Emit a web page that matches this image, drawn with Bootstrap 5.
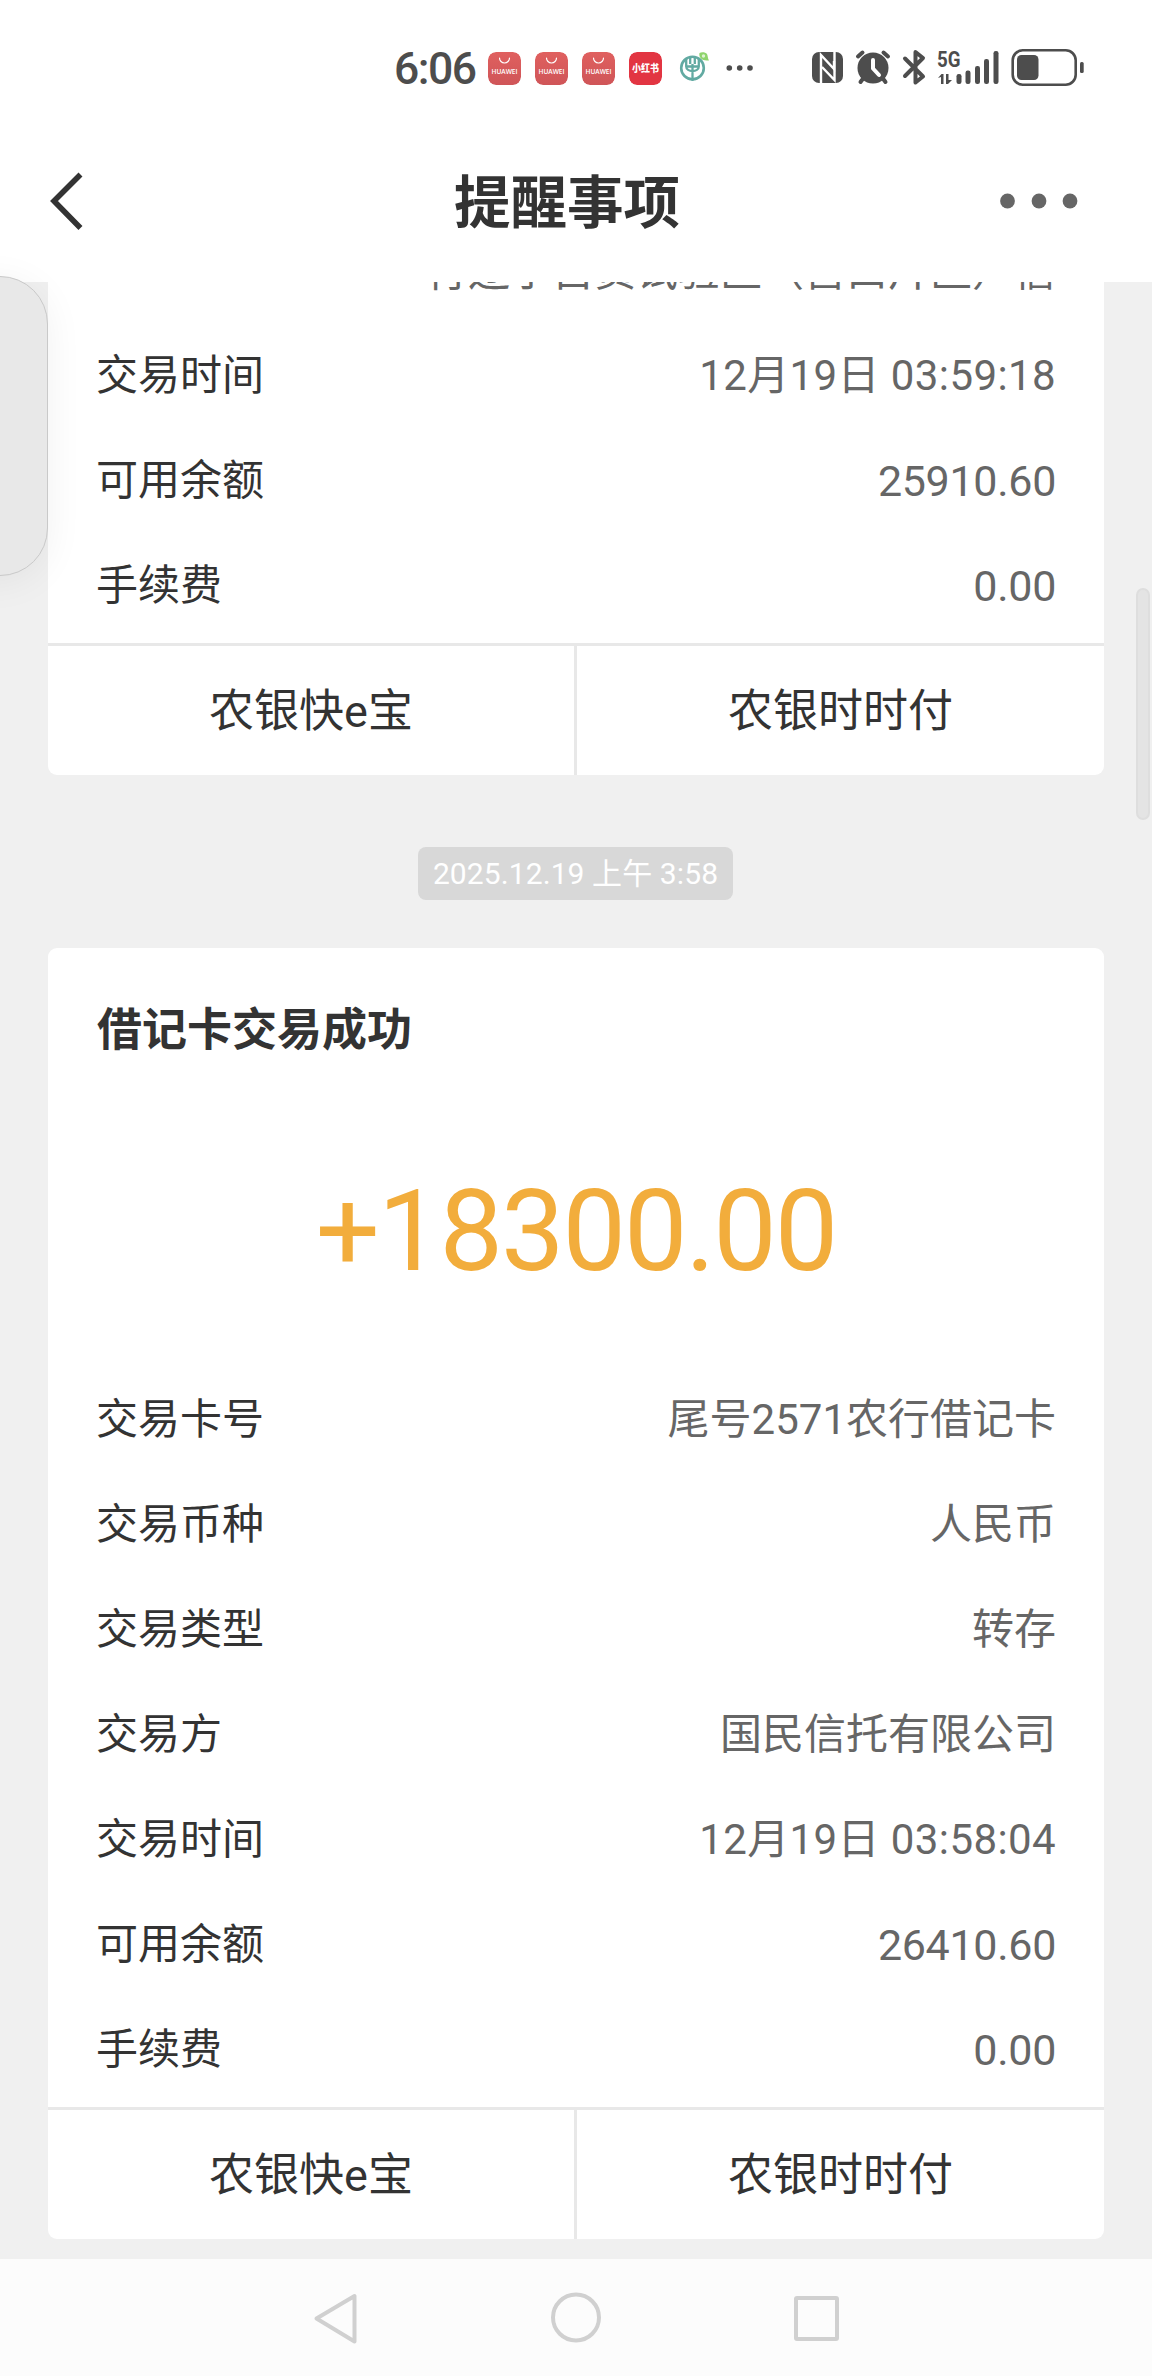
<!DOCTYPE html>
<html lang="zh-CN">
<head>
<meta charset="utf-8">
<meta name="viewport" content="width=device-width, initial-scale=1">
<title>提醒事项</title>
<link href="https://cdn.jsdelivr.net/npm/bootstrap@5.3.0/dist/css/bootstrap.min.css" rel="stylesheet">
<style>
body{width:1152px;height:2376px;overflow:hidden;background:#f0f0f0;color:#333;font-family:Roboto,"Noto Sans CJK SC",sans-serif;font-size:42px;line-height:60px}
.statusbar{height:136px;padding:49px 68px 0 394px}
.clock{width:94px;font:500 44.500px/37px Roboto,sans-serif;letter-spacing:-1.5px;padding-top:2px;color:#4d4d4d}
.app-ico{width:33px;height:33px;border-radius:8px;margin:3px 14px 0 0;color:#fff}
.titlebar{height:146px;padding:0 73px 16px 49px}
.titlebar h1{font:700 56.500px/70px "Noto Sans CJK SC",sans-serif;padding:0 0 6px 6px}
.feed{height:1977px}
.msg{width:1056px;border-radius:9px;overflow:hidden}
.msg.cut{border-radius:0 0 9px 9px}
.cut-line{height:41px;padding-right:48px;color:#666}
.cut-line span{margin-bottom:21px}
.line{height:105px;padding:1px 48px 0}
.line .val{color:#666}
.line .num{font-size:43px;letter-spacing:-.3px}
.line .when{letter-spacing:.4px}
.msg-foot{margin-top:5px;border-top:3px solid #e8e8e8;height:132px;font-size:45px}
.msg-foot a{color:#333;height:129px;padding-top:3px}
.msg-foot a:first-child{width:526px}
.msg-foot a+a{width:530px;border-left:3px solid #e8e8e8}
.pill{height:53px;width:315px;border-radius:8px;background:#d8d8d8;color:#fff;font-size:30px;letter-spacing:.1px;padding-top:1px;margin:72px 1px 48px 0}
.msg-title{height:160px;padding:5px 0 0 49px;font-weight:700;font-size:45px}
.amount{height:259px;color:#f2ad3c;font-size:113px;line-height:112px;letter-spacing:-2px;padding-bottom:12px}
.sysnav{height:117px;background:#fcfcfc}
.side-panel{left:-60px;top:276px;width:108px;height:300px;border:1.5px solid #c9c9c9;border-radius:48px;background:#e8e8e8;box-shadow:0 6px 38px rgba(0,0,0,.06)}
.thumb{left:1136px;top:588px;width:14px;height:232px;border-radius:7px;background:#e4e4e4;border:2px solid #dedede}
</style>
<script src="https://cdn.jsdelivr.net/npm/bootstrap@5.3.0/dist/js/bootstrap.bundle.min.js"></script>
</head>
<body class="position-relative">
<svg width="0" height="0" class="position-absolute">
  <defs>
    <linearGradient id="hw" x1="0" y1="0" x2="0" y2="1"><stop offset="0" stop-color="#e0605f"/><stop offset="1" stop-color="#cf5558"/></linearGradient>
    <symbol id="store" viewBox="0 0 33 33"><rect width="33" height="33" rx="8" fill="url(#hw)"/><path d="M11.5 6a5 5 0 0 0 10 0" fill="none" stroke="#fff" stroke-width="1.2" stroke-linecap="round"/><text x="16.5" y="21.5" text-anchor="middle" textLength="26" lengthAdjust="spacingAndGlyphs" font-family="Open Sans, sans-serif" font-weight="600" font-size="7.8" fill="#fff">HUAWEI</text></symbol>
  </defs>
</svg>

<header class="bg-white">
  <div class="statusbar d-flex align-items-start">
    <div class="clock">6:06</div>
    <svg class="app-ico"><use href="#store"/></svg>
    <svg class="app-ico"><use href="#store"/></svg>
    <svg class="app-ico"><use href="#store"/></svg>
    <svg class="app-ico" viewBox="0 0 33 33"><rect width="33" height="33" rx="8" fill="#e23542"/><text x="16.5" y="20.3" text-anchor="middle" textLength="27" lengthAdjust="spacingAndGlyphs" font-family="Noto Sans CJK SC, sans-serif" font-weight="900" font-size="10" fill="#fff">小红书</text></svg>
    <svg width="80" height="37" viewBox="676 49 80 37">
      <circle cx="692.5" cy="68" r="11.3" fill="none" stroke="#62aaa2" stroke-width="2.6"/>
      <path d="M690.200 56v8M694.800 56v8M686.200 59v7.500c0 3 3 4.500 6.300 4.500s6.300-1.500 6.300-4.500V59M686.500 66.500h12M692.500 64v17" fill="none" stroke="#62aaa2" stroke-width="2.300"/>
      <path d="M699.500 53c2-1.500 6-1 7.500 1 1 2 .5 4 2 6.500-3 0-6 0-8-2-1.500-1.500-2-3.500-1.500-5.500z" fill="#8fd46d"/><circle cx="703.500" cy="56" r="1.700" fill="#dff3d3"/>
      <g fill="#4d4d4d"><circle cx="729.300" cy="68" r="2.800"/><circle cx="739.700" cy="68" r="2.800"/><circle cx="750" cy="68" r="2.800"/></g>
    </svg>
    <svg class="ms-auto overflow-visible" width="276" height="38" viewBox="808 49 276 38" fill="#4d4d4d">
      <rect x="812" y="52" width="31" height="31" rx="7"/>
      <path d="M821 84V55L834 69V61" fill="none" stroke="#fff" stroke-width="2.400"/>
      <path d="M834.500 51V80L822 67" fill="none" stroke="#fff" stroke-width="2.400"/>
      <g stroke="#4d4d4d" stroke-width="4" stroke-linecap="round"><path d="M858 56.500l4.500-4M888 56.500l-4.500-4M860.500 82l3-4M885.500 82l-3-4"/></g>
      <circle cx="873" cy="68" r="15.500"/><path d="M873 60v8.500l6 6.500" fill="none" stroke="#fff" stroke-width="4" stroke-linecap="round" stroke-linejoin="round"/>
      <path d="M905 58.500l18 18-7.500 6v-30.500l7.500 6-18 18" fill="none" stroke="#4d4d4d" stroke-width="4" stroke-linecap="round" stroke-linejoin="round"/>
      <text x="937" y="67" textLength="23.500" lengthAdjust="spacingAndGlyphs" font-family="Roboto, sans-serif" font-size="21.500" font-weight="700">5G</text>
      <path d="M938 78l3.500-4h2v10h-2.500v-7zM946 74h2.500v6h3.500l-4 4h-2z"/>
      <rect x="956.500" y="74" width="5" height="10" rx="2.200"/><rect x="965.500" y="70.500" width="5" height="13.500" rx="2.200"/><rect x="975" y="66" width="5" height="18" rx="2.200"/><rect x="984" y="59" width="5" height="25" rx="2.200"/><rect x="993.500" y="51" width="5" height="33" rx="2.200"/>
      <rect x="1012.700" y="50.300" width="63" height="34.400" rx="10" fill="none" stroke="#4d4d4d" stroke-width="2.600"/><rect x="1017" y="55" width="21.500" height="25" rx="4.500"/><rect x="1080" y="62" width="3.700" height="11" rx="1.500"/>
    </svg>
  </div>
  <div class="titlebar d-flex align-items-center justify-content-between">
    <svg width="80" height="58" viewBox="49 171 80 58"><path d="M78.500 175.500L54 200l24.500 25" fill="none" stroke="#333" stroke-width="5.600" stroke-linecap="square"/></svg>
    <h1 class="m-0">提醒事项</h1>
    <svg width="80" height="16" viewBox="0 0 80 16" fill="#666"><circle cx="8.500" cy="8" r="7.400"/><circle cx="40" cy="8" r="7.400"/><circle cx="71" cy="8" r="7.400"/></svg>
  </div>
</header>

<main class="feed d-flex flex-column align-items-center overflow-hidden">
  <section class="msg cut bg-white flex-shrink-0">
    <div class="cut-line d-flex justify-content-end align-items-end overflow-hidden"><span>行辽宁自贸试验区（营口片区）信</span></div>
    <div class="line d-flex justify-content-between align-items-center"><span>交易时间</span><span class="val when">12月19日 03:59:18</span></div>
    <div class="line d-flex justify-content-between align-items-center"><span>可用余额</span><span class="val num">25910.60</span></div>
    <div class="line d-flex justify-content-between align-items-center"><span>手续费</span><span class="val num">0.00</span></div>
    <div class="msg-foot d-flex">
      <a class="d-flex align-items-center justify-content-center text-decoration-none">农银快e宝</a>
      <a class="d-flex align-items-center justify-content-center text-decoration-none">农银时时付</a>
    </div>
  </section>

  <div class="pill d-flex align-items-center justify-content-center flex-shrink-0">2025.12.19 上午 3:58</div>

  <section class="msg bg-white flex-shrink-0">
    <div class="msg-title d-flex align-items-center">借记卡交易成功</div>
    <div class="amount d-flex align-items-center justify-content-center">+18300.00</div>
    <div class="line d-flex justify-content-between align-items-center"><span>交易卡号</span><span class="val">尾号2571农行借记卡</span></div>
    <div class="line d-flex justify-content-between align-items-center"><span>交易币种</span><span class="val">人民币</span></div>
    <div class="line d-flex justify-content-between align-items-center"><span>交易类型</span><span class="val">转存</span></div>
    <div class="line d-flex justify-content-between align-items-center"><span>交易方</span><span class="val">国民信托有限公司</span></div>
    <div class="line d-flex justify-content-between align-items-center"><span>交易时间</span><span class="val when">12月19日 03:58:04</span></div>
    <div class="line d-flex justify-content-between align-items-center"><span>可用余额</span><span class="val num">26410.60</span></div>
    <div class="line d-flex justify-content-between align-items-center"><span>手续费</span><span class="val num">0.00</span></div>
    <div class="msg-foot d-flex">
      <a class="d-flex align-items-center justify-content-center text-decoration-none">农银快e宝</a>
      <a class="d-flex align-items-center justify-content-center text-decoration-none">农银时时付</a>
    </div>
  </section>
</main>

<nav class="sysnav d-flex justify-content-center align-items-center">
  <svg width="530" height="60" viewBox="311 2287.500 530 60" fill="none" stroke="#d0d0d0" stroke-width="4" stroke-linejoin="round"><path d="M354.500 2295.500v45.500l-38-23z"/><circle cx="576" cy="2317" r="23"/><rect x="796" y="2297.500" width="41" height="41" rx="1"/></svg>
</nav>

<div class="side-panel position-absolute"></div>
<div class="thumb position-absolute"></div>
</body>
</html>
